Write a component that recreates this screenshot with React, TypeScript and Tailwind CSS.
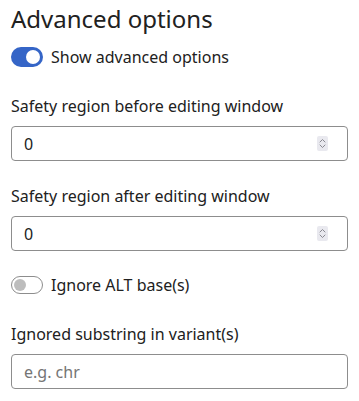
import React from "react";

function Spinner() {
  return (
    <div className="w-[11px] h-[15px] bg-[#e9e9ef] rounded-[2px] flex items-center justify-center">
      <svg width="9" height="13" viewBox="0 0 9 13" fill="none" stroke="#8a8a92" strokeWidth="1" strokeLinecap="round" strokeLinejoin="round">
        <path d="M2 5 L4.5 2.5 L7 5" />
        <path d="M2 8 L4.5 10.5 L7 8" />
      </svg>
    </div>
  );
}

function Field({ label, children }: { label: string; children: React.ReactNode }) {
  return (
    <div className="flex flex-col">
      <div className="text-[16px] leading-[24px]">{label}</div>
      <div className="mt-[8px] h-[35px] border border-[#8d8d8d] rounded-[4px] flex items-center pl-[12px] pr-[19px]">
        {children}
      </div>
    </div>
  );
}

export default function App() {
  return (
    <div className="w-[359px] h-[401px] bg-white px-[11px] pt-[3px] font-['Noto_Sans',sans-serif] text-[#212121]">
      <h2 className="text-[24px] leading-[32px] font-normal">Advanced options</h2>
      <div className="mt-[12px] flex items-center h-[20px]">
        <div className="w-[32px] h-[20px] rounded-full bg-[#3565c7] flex items-center justify-end pr-[3px]">
          <div className="w-[14px] h-[14px] rounded-full bg-white" />
        </div>
        <span className="ml-[8px] text-[16px] leading-[24px]">Show advanced options</span>
      </div>
      <div className="mt-[27px]">
        <Field label="Safety region before editing window">
          <span className="flex-1 text-[16px]">0</span>
          <Spinner />
        </Field>
      </div>
      <div className="mt-[23px]">
        <Field label="Safety region after editing window">
          <span className="flex-1 text-[16px]">0</span>
          <Spinner />
        </Field>
      </div>
      <div className="mt-[25px] flex items-center h-[18px]">
        <div className="w-[32px] h-[18px] rounded-full bg-white border border-[#8d8d8d] flex items-center pl-[2px]">
          <div className="w-[12px] h-[12px] rounded-full bg-[#bdbdbd]" />
        </div>
        <span className="ml-[8px] text-[16px] leading-[24px]">Ignore ALT base(s)</span>
      </div>
      <div className="mt-[28px]">
        <Field label="Ignored substring in variant(s)">
          <span className="flex-1 text-[16px] text-[#757575]">e.g. chr</span>
        </Field>
      </div>
    </div>
  );
}
